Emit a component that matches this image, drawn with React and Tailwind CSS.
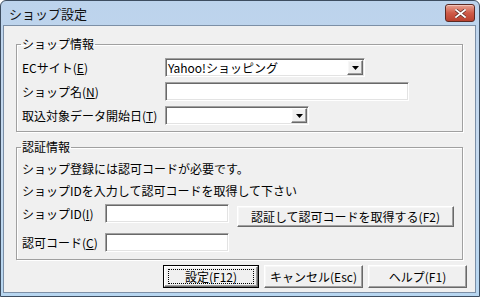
import React from 'react'

const sunken =
  'bg-white border border-t-[#a0a0a0] border-l-[#a0a0a0] border-b-white border-r-white shadow-[inset_1px_1px_0_#696969,inset_-1px_-1px_0_#e3e3e3]'

const raised =
  'bg-[#f0f0f0] border border-t-white border-l-white border-b-[#696969] border-r-[#696969] shadow-[inset_-1px_-1px_0_#a0a0a0,inset_1px_1px_0_#f7f7f7]'

function Key({ k }) {
  return (
    <>
      (<span className="underline underline-offset-[1px]">{k}</span>)
    </>
  )
}

function Arrow() {
  return (
    <span className={`${raised} w-[16px] h-[15px] flex items-center justify-center shrink-0`}>
      <svg width="7" height="4" viewBox="0 0 7 4">
        <path d="M0 0h7L3.5 4z" fill="#000" />
      </svg>
    </span>
  )
}

function Combo({ width, value }) {
  return (
    <div className={`${sunken} h-[19px] flex items-center pl-[2px] pr-[1px]`} style={{ width }}>
      <span className="flex-1 leading-[14px] whitespace-nowrap">{value}</span>
      <Arrow />
    </div>
  )
}

function Input({ width }) {
  return <div className={`${sunken} h-[19px]`} style={{ width }} />
}

function GroupBox({ title, children, className = '' }) {
  return (
    <fieldset
      className={`mx-[12px] px-[5px] border border-[#a0a0a0] shadow-[inset_1px_1px_0_#fff,1px_1px_0_#fff] ${className}`}
    >
      <legend className="px-[1px] -ml-[1px] leading-[14px]">{title}</legend>
      {children}
    </fieldset>
  )
}

export default function App() {
  return (
    <div className="w-[480px] h-[297px] bg-white font-['Noto_Sans_CJK_JP','Liberation_Sans',sans-serif] text-[12px] text-black">
      <div className="w-[480px] h-[297px] flex flex-col rounded-t-[6px] border border-[#3d4d60] bg-gradient-to-b from-[#bcd3ec] via-[#c6daef] to-[#b7d6f0] pl-[2px] pr-[3px] pb-[3px]">
        {/* title bar */}
        <div className="h-[24px] flex items-start justify-between shrink-0">
          <span className="pl-[6px] pt-[5px] leading-[16px] text-[13px] text-[#111]">ショップ設定</span>
          <button className="mt-[3px] mr-[1px] w-[30px] h-[18px] rounded-[3px] border border-[#5b2a24] bg-gradient-to-b from-[#e6a293] via-[#cf5b48] to-[#b8412f] shadow-[inset_0_1px_0_#f2c4ba] flex items-center justify-center">
            <svg width="11" height="9" viewBox="0 0 11 9">
              <path d="M1 1l9 7M10 1L1 8" stroke="#5b2a24" strokeWidth="3.2" strokeLinecap="square" />
              <path d="M1 1l9 7M10 1L1 8" stroke="#fff" strokeWidth="1.8" strokeLinecap="square" />
            </svg>
          </button>
        </div>

        {/* client area */}
        <div className="flex-1 border border-[#7c8fa6] bg-[#f0f0f0] pt-[11px] flex flex-col">
          <GroupBox title="ショップ情報" className="pt-[7px] pb-[6px]">
            <div className="flex flex-col gap-[5px]">
              <div className="flex items-center">
                <span className="w-[143px] leading-[14px]">ECサイト<Key k="E" /></span>
                <Combo width={200} value="Yahoo!ショッピング" />
              </div>
              <div className="flex items-center">
                <span className="w-[143px] leading-[14px]">ショップ名<Key k="N" /></span>
                <Input width={244} />
              </div>
              <div className="flex items-center">
                <span className="w-[143px] leading-[14px] whitespace-nowrap">取込対象データ開始日<Key k="T" /></span>
                <Combo width={144} value="" />
              </div>
            </div>
          </GroupBox>

          <GroupBox title="認証情報" className="mt-[8px] pt-[8px] pb-[7px]">
            <div className="flex flex-col">
              <p className="leading-[14px]">ショップ登録には認可コードが必要です。</p>
              <p className="leading-[14px] mt-[8px]">ショップIDを入力して認可コードを取得して下さい</p>
              <div className="flex items-start mt-[6px]">
                <span className="w-[83px] leading-[14px] pt-[3px]">ショップID<Key k="I" /></span>
                <Input width={124} />
                <button className={`${raised} ml-[8px] mt-[2px] w-[217px] h-[21px] leading-[14px]`}>
                  認証して認可コードを取得する(F2)
                </button>
              </div>
              <div className="flex items-center mt-[6px]">
                <span className="w-[83px] leading-[14px]">認可コード<Key k="C" /></span>
                <Input width={124} />
              </div>
            </div>
          </GroupBox>

          <div className="flex justify-end gap-[5px] mt-[5px] pr-[8px]">
            <button className="w-[96px] h-[23px] border border-black p-0">
              <span className={`${raised} w-full h-full flex items-center justify-center`}>
                <span className="border border-dotted border-black w-[86px] h-[15px] leading-[13px] whitespace-nowrap flex items-center justify-center">
                  設定(F12)
                </span>
              </span>
            </button>
            <button className={`${raised} w-[99px] h-[23px] leading-[14px]`}>キャンセル(Esc)</button>
            <button className={`${raised} w-[99px] h-[23px] leading-[14px]`}>ヘルプ(F1)</button>
          </div>
        </div>
      </div>
    </div>
  )
}
